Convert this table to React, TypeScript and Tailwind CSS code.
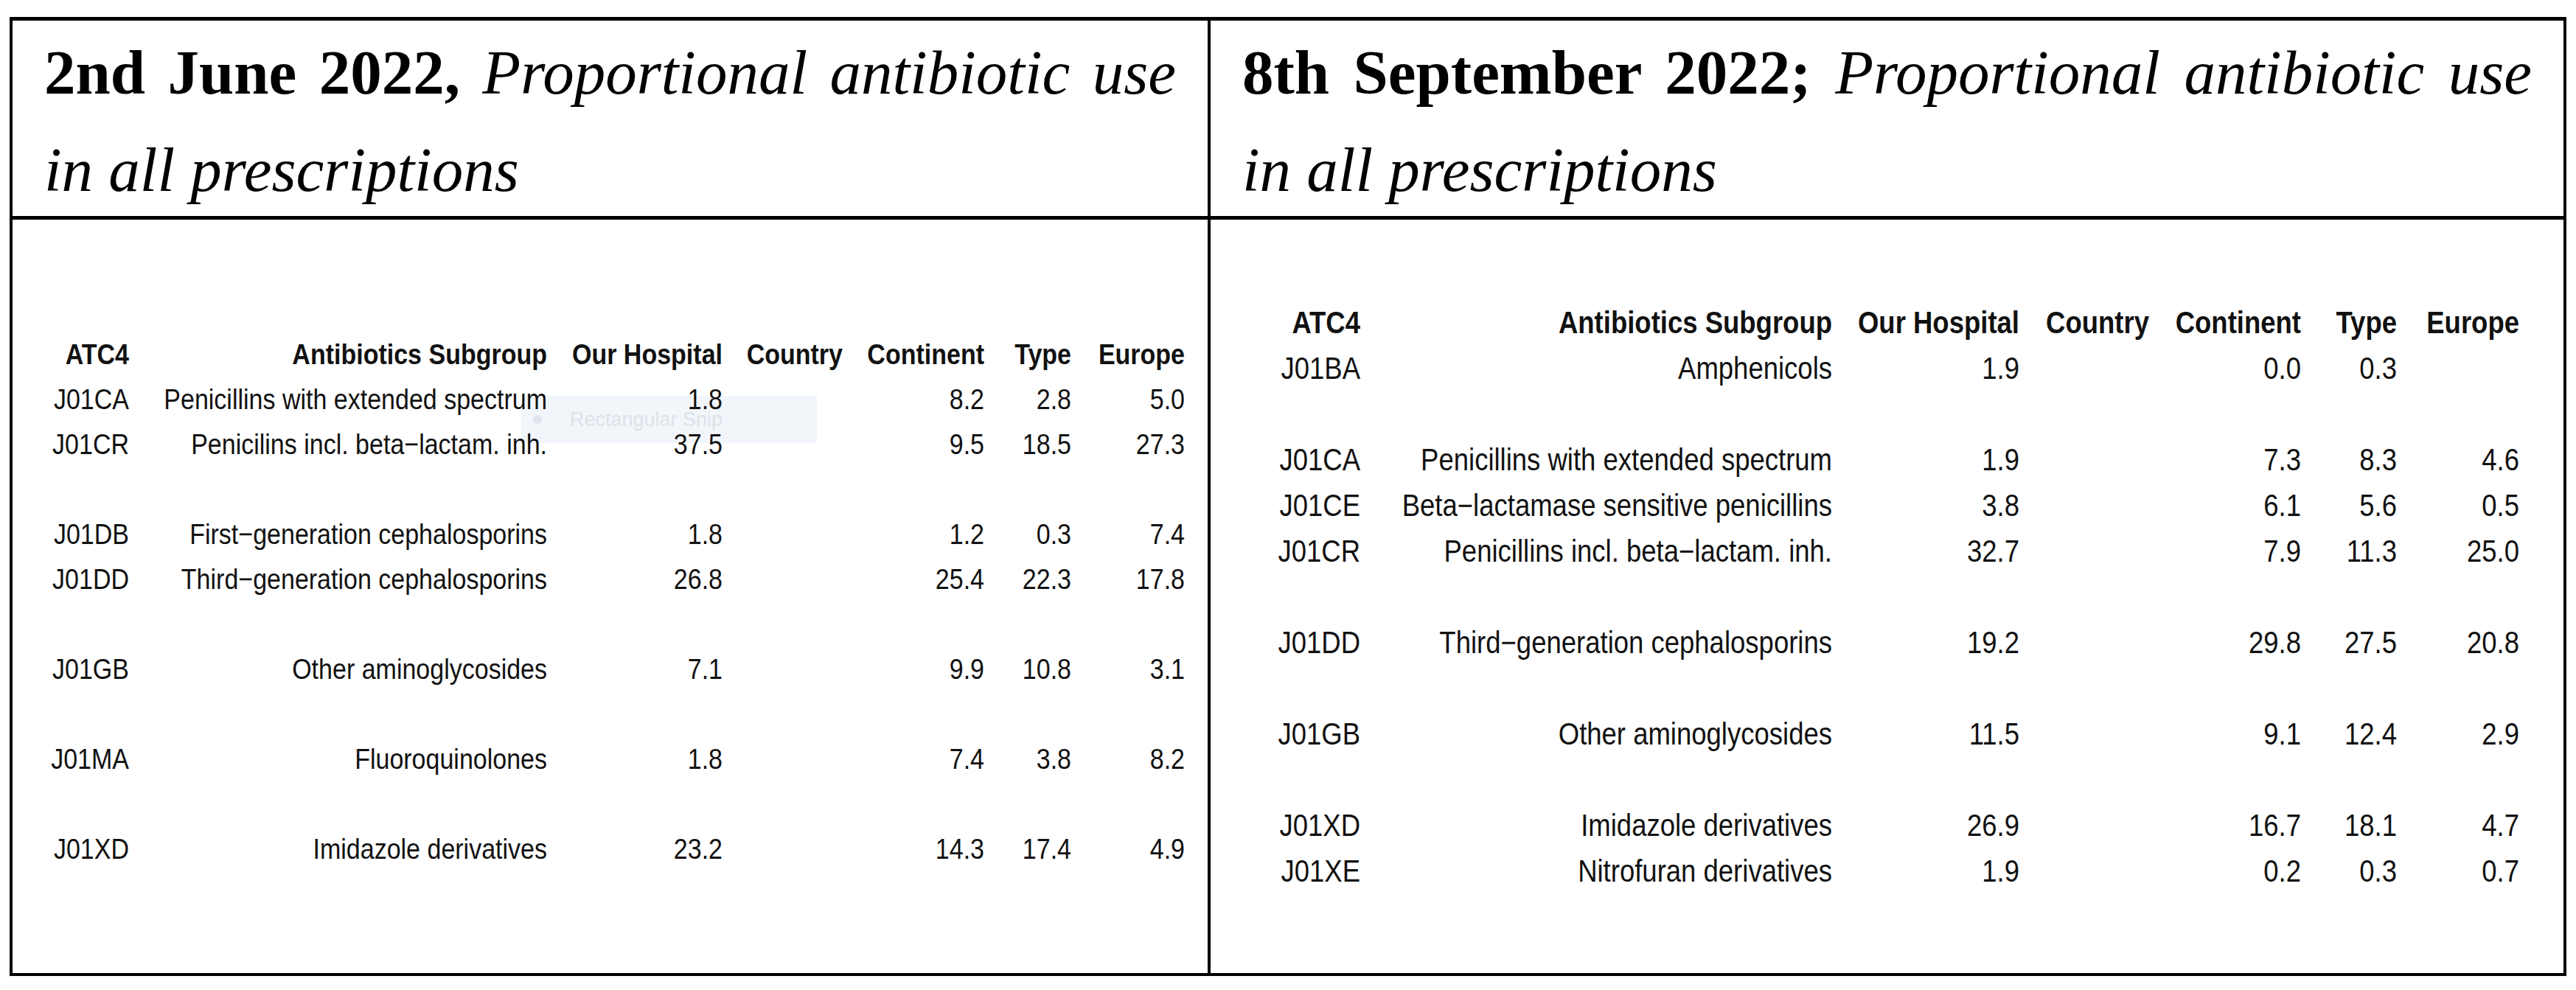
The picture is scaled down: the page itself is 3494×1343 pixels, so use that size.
type Row = [string, string, string, string, string, string, string] | null;

const juneRows: Row[] = [
  ['J01CA', 'Penicillins with extended spectrum', '1.8', '', '8.2', '2.8', '5.0'],
  ['J01CR', 'Penicilins incl. beta\u2212lactam. inh.', '37.5', '', '9.5', '18.5', '27.3'],
  null,
  ['J01DB', 'First\u2212generation cephalosporins', '1.8', '', '1.2', '0.3', '7.4'],
  ['J01DD', 'Third\u2212generation cephalosporins', '26.8', '', '25.4', '22.3', '17.8'],
  null,
  ['J01GB', 'Other aminoglycosides', '7.1', '', '9.9', '10.8', '3.1'],
  null,
  ['J01MA', 'Fluoroquinolones', '1.8', '', '7.4', '3.8', '8.2'],
  null,
  ['J01XD', 'Imidazole derivatives', '23.2', '', '14.3', '17.4', '4.9'],
];

const septRows: Row[] = [
  ['J01BA', 'Amphenicols', '1.9', '', '0.0', '0.3', ''],
  null,
  ['J01CA', 'Penicillins with extended spectrum', '1.9', '', '7.3', '8.3', '4.6'],
  ['J01CE', 'Beta\u2212lactamase sensitive penicillins', '3.8', '', '6.1', '5.6', '0.5'],
  ['J01CR', 'Penicillins incl. beta\u2212lactam. inh.', '32.7', '', '7.9', '11.3', '25.0'],
  null,
  ['J01DD', 'Third\u2212generation cephalosporins', '19.2', '', '29.8', '27.5', '20.8'],
  null,
  ['J01GB', 'Other aminoglycosides', '11.5', '', '9.1', '12.4', '2.9'],
  null,
  ['J01XD', 'Imidazole derivatives', '26.9', '', '16.7', '18.1', '4.7'],
  ['J01XE', 'Nitrofuran derivatives', '1.9', '', '0.2', '0.3', '0.7'],
];

const heads = ['ATC4', 'Antibiotics Subgroup', 'Our Hospital', 'Country', 'Continent', 'Type', 'Europe'];

function Title({ date }: { date: string }) {
  return (
    <div className="pt-[4px] px-[43px] font-['Liberation_Serif',serif] text-[85px] leading-[132px] text-black">
      <div className="whitespace-nowrap text-justify [text-align-last:justify]">
        <span className="font-bold">{date}</span>
        <span className="italic"> Proportional antibiotic use</span>
      </div>
      <div className="italic whitespace-nowrap">in all prescriptions</div>
    </div>
  );
}

function DataTable({ rows, cols, size }: { rows: Row[]; cols: string; size: 'sm' | 'lg' }) {
  const rowCls = size === 'sm' ? 'h-[61px] leading-[61px]' : 'h-[62px] leading-[62px]';
  return (
    <div
      className={`relative grid ${cols} font-['Liberation_Sans',Arial,sans-serif] text-[#111] ${
        size === 'sm' ? 'text-[34px]' : 'text-[36.5px]'
      }`}
    >
      {heads.map((h) => (
        <div key={h} className={`${rowCls} text-right font-bold whitespace-nowrap`}>
          <span className="inline-block scale-y-[1.15]">{h}</span>
        </div>
      ))}
      {rows.map((r, i) =>
        r ? (
          r.map((c, j) => (
            <div key={`${i}-${j}`} className={`${rowCls} text-right whitespace-nowrap`}>
              <span className="inline-block scale-y-[1.15]">{c}</span>
            </div>
          ))
        ) : (
          <div key={`gap-${i}`} className={`${rowCls} col-span-7`} />
        )
      )}
    </div>
  );
}

export default function App() {
  return (
    <div className="min-h-screen bg-white pl-[13px] pt-[23px]">
      <div className="w-[3468px] h-[1301px] border-x-4 border-t-[5px] border-b-4 border-black flex flex-col">
        <div className="h-[270px] flex border-b-[5px] border-black">
          <div className="w-[1625px] border-r-4 border-black">
            <Title date="2nd June 2022," />
          </div>
          <div className="flex-1">
            <Title date="8th September 2022;" />
          </div>
        </div>
        <div className="flex-1 flex">
          <div className="relative w-[1625px] border-r-4 border-black pt-[152px] pl-[43px]">
            <div className="absolute left-[690px] top-[239px] w-[401px] h-[64px] bg-[#f2f6fb] flex items-center gap-[38px] pl-[16px]">
              <span className="w-[12px] h-[12px] rounded-full bg-[#dfe5ed]" />
              <span className="font-['Liberation_Sans',sans-serif] text-[27px] text-[#dde2e8]">Rectangular Snip</span>
            </div>
            <DataTable
              rows={juneRows}
              size="sm"
              cols="grid-cols-[115px_567px_238px_163px_192px_118px_154px]"
            />
          </div>
          <div className="flex-1 pt-[109px] pl-[43px]">
            <DataTable
              rows={septRows}
              size="lg"
              cols="grid-cols-[160px_640px_254px_176px_206px_130px_166px]"
            />
          </div>
        </div>
      </div>
    </div>
  );
}
